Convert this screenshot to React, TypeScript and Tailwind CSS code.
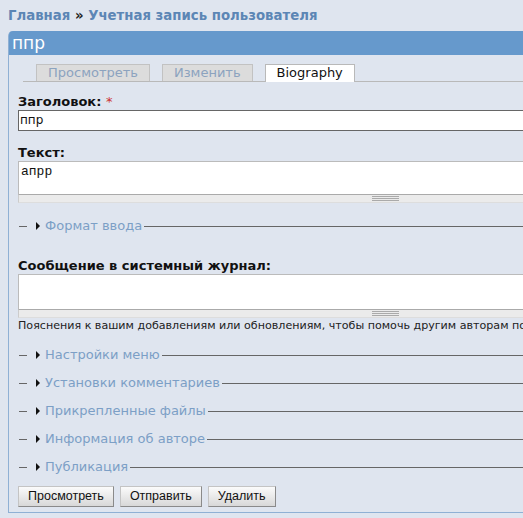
import React from 'react';

const sections = [
  'Настройки меню',
  'Установки комментариев',
  'Прикрепленные файлы',
  'Информация об авторе',
  'Публикация',
];

function Collapsed({ title, className = '' }: { title: string; className?: string }) {
  return (
    <div className={`flex h-[16px] items-center ${className}`}>
      <div className="ml-px h-px w-[8px] bg-[#666]" />
      <svg width="5" height="8" viewBox="0 0 5 8" className="ml-[9px]">
        <path d="M0 0 L4 4 L0 8 Z" fill="#111" />
      </svg>
      <span className="ml-[4px] whitespace-nowrap text-[13px] text-[#7c9fc6]">{title}</span>
      <div className="ml-[2px] h-px flex-1 bg-[#666]" />
    </div>
  );
}

function Grippie() {
  return (
    <div className="flex h-[9px] items-center justify-center border border-t-[#aaa] border-x-[#ccc] border-b-[#ddd] bg-[#ebebeb]">
      <div className="flex w-[27px] flex-col gap-[1px]">
        <div className="h-px bg-[#aaa]" />
        <div className="h-px bg-[#aaa]" />
        <div className="h-px bg-[#aaa]" />
      </div>
    </div>
  );
}

function Btn({ children }: { children: React.ReactNode }) {
  return (
    <button className="h-[21px] border border-[#c4c4c4] border-r-[#8a8a8a] border-b-[#8a8a8a] bg-gradient-to-b from-[#fbfbfb] to-[#d8d8d8] px-[9px] font-['Liberation_Sans'] text-[12.5px] leading-[19px] text-[#111]">
      {children}
    </button>
  );
}

export default function App() {
  return (
    <div className="min-h-screen w-[523px] overflow-hidden bg-[#dfe5ef] font-['DejaVu_Sans',sans-serif]">
      <div className="h-[31px] whitespace-nowrap pl-2 pt-[8px] text-[13.3px] font-bold leading-[16px] text-[#5c86b5]">
        Главная <span className="text-[#222]">»</span> Учетная запись пользователя
      </div>

      <div className="ml-2 w-[760px] rounded-tl-[5px] border-b border-l border-[#8fb0d4] pb-[5px]">
        <div className="h-[24px] rounded-tl-[4px] bg-[#6699cc] px-[3px] text-[17px] leading-[24px] text-white">ппр</div>

        <div className="mt-[9px] ml-[14px] flex gap-[12px] border-b border-[#b9b9b9] pl-[13px]">
          <div className="h-[17px] border border-b-0 border-[#c2c2c2] bg-[#dcdcdc] px-[11px] text-[13px] leading-[16px] text-[#8ca3bf]">Просмотреть</div>
          <div className="h-[17px] border border-b-0 border-[#c2c2c2] bg-[#dcdcdc] px-[11px] text-[13px] leading-[16px] text-[#8ca3bf]">Изменить</div>
          <div className="-mb-px h-[18px] border border-b-0 border-[#b9b9b9] bg-white px-[11px] text-[13px] leading-[16px] text-[#111]">Biography</div>
        </div>

        <div className="w-[744px] pl-[9px]">
          <div className="mt-[12px] mb-px text-[13px] font-bold leading-[15px] text-[#111]">
            Заголовок: <span className="font-normal text-[#cc3333]">*</span>
          </div>
          <div className="h-[21px] border border-[#666] bg-white px-[1px] text-[12px] leading-[19px] text-[#111]">ппр</div>

          <div className="mt-[14px] mb-px text-[13px] font-bold leading-[15px] text-[#111]">Текст:</div>
          <div className="h-[33px] border border-b-0 border-[#bbb] bg-white px-[2px] pt-[2px] font-['Liberation_Mono'] text-[13px] leading-[16px] text-[#111]">апрр</div>
          <Grippie />

          <Collapsed title="Формат ввода" className="mt-[15px]" />

          <div className="mt-[24px] mb-px text-[13px] font-bold leading-[15px] text-[#111]">Сообщение в системный журнал:</div>
          <div className="h-[35px] border border-b-0 border-[#bbb] bg-white" />
          <Grippie />
          <div className="mt-px whitespace-nowrap text-[11.1px] leading-[14px] text-[#222]">
            Пояснения к вашим добавлениям или обновлениям, чтобы помочь другим авторам понять ваши мотивы.
          </div>

          {sections.map((s, i) => (
            <Collapsed key={s} title={s} className={i === 0 ? 'mt-[14px]' : 'mt-[12px]'} />
          ))}

          <div className="mt-[11px] flex gap-[6px]">
            <Btn>Просмотреть</Btn>
            <Btn>Отправить</Btn>
            <Btn>Удалить</Btn>
          </div>
        </div>
      </div>
    </div>
  );
}
